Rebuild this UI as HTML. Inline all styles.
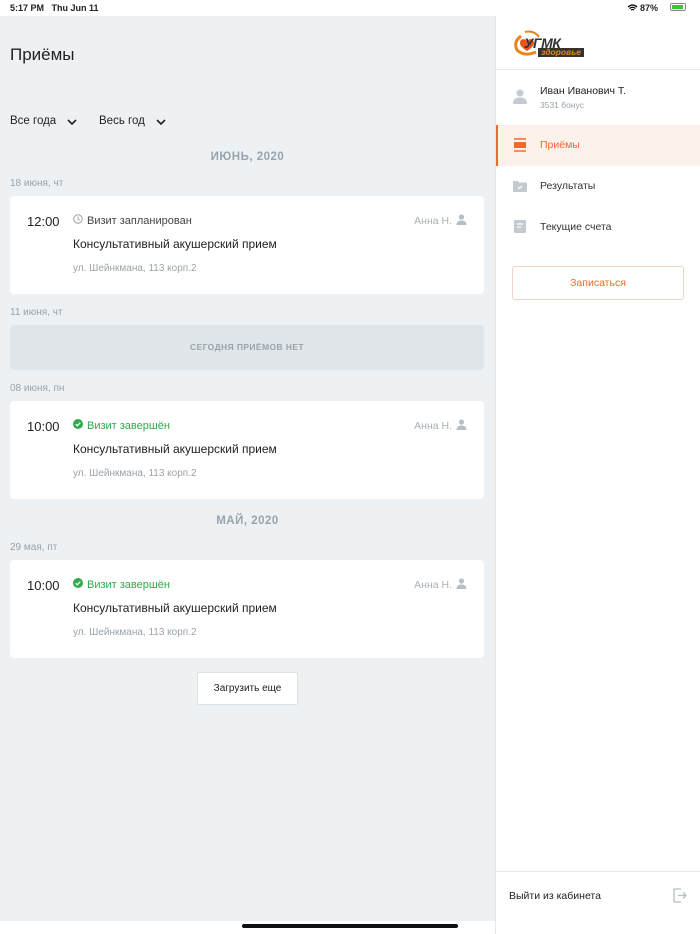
<!DOCTYPE html>
<html><head><meta charset="utf-8"><style>
*{margin:0;padding:0;box-sizing:border-box}
body{width:700px;height:934px;background:#fff;font-family:"Liberation Sans",sans-serif;position:relative;overflow:hidden;color:#222}
.a{position:absolute}
.main{left:0;top:16px;width:495px;height:905px;background:#edf1f4}
.side{left:495px;top:16px;width:205px;height:918px;background:#fff;border-left:1px solid #e3e7ea}
.card{position:absolute;left:10px;width:474px;height:98px;background:#fff;border-radius:4px}
.t{position:absolute;left:17px;top:18px;font-size:13px;color:#222}
.st{position:absolute;left:63px;top:19px;font-size:11px;color:#444}
.st.g{color:#2faa4a}
.tt{position:absolute;left:63px;top:41px;font-size:12px;color:#222}
.ad{position:absolute;left:63px;top:67px;font-size:10px;color:#9aa3aa}
.doc{position:absolute;right:32px;top:19px;font-size:10.5px;color:#a8b0b6}
.pi{position:absolute;right:17px;top:18px}
.dt{position:absolute;left:10px;font-size:10px;color:#99a1a8}
.mh{position:absolute;left:0;width:495px;text-align:center;font-size:11.5px;font-weight:bold;color:#9aa3ab;letter-spacing:.5px}
.mi{position:absolute;left:0;width:205px;height:41px}
.mi span{position:absolute;left:44px;top:14px;font-size:10.5px;color:#333}
</style></head><body>
<div class="a" style="left:10px;top:3px;font-size:9px;font-weight:bold">5:17 PM&nbsp;&nbsp; Thu Jun 11</div>
<div class="a" style="left:640px;top:3px;font-size:9px;font-weight:bold">87%</div>
<svg class="a" style="left:627px;top:4px" width="11" height="8"><path d="M1 3Q5.5-1 10 3M2.5 4.5Q5.5 2 8.5 4.5M4 6Q5.5 5 7 6" stroke="#000" stroke-width="1.3" fill="none"/></svg>
<div class="a" style="left:670px;top:3px;width:16px;height:8px;border:1px solid #888;border-radius:2px;padding:1px"><div style="width:11px;height:4px;background:#3c3"></div></div>

<div class="a main">
<div class="a" style="left:10px;top:29px;font-size:17px;color:#222">Приёмы</div>
<div class="a" style="left:10px;top:99px;font-size:11.5px">Все года</div>
<svg class="a" style="left:67px;top:103px" width="10" height="7"><path d="M1 1l4 4 4-4" stroke="#222" stroke-width="1.6" fill="none"/></svg>
<div class="a" style="left:99px;top:99px;font-size:11.5px">Весь год</div>
<svg class="a" style="left:156px;top:103px" width="10" height="7"><path d="M1 1l4 4 4-4" stroke="#222" stroke-width="1.6" fill="none"/></svg>
<div class="mh" style="top:135px">ИЮНЬ, 2020</div>
<div class="dt" style="top:162px">18 июня, чт</div>
<div class="card" style="top:180px">
 <div class="t">12:00</div>
 <svg class="a" style="left:63px;top:18px" width="10" height="10"><circle cx="5" cy="5" r="4.2" stroke="#9aa3aa" fill="none"/><path d="M5 2.5V5l1.8 1.2" stroke="#9aa3aa" fill="none"/></svg>
 <div class="st" style="left:77px">Визит запланирован</div>
 <div class="tt">Консультативный акушерский прием</div>
 <div class="ad">ул. Шейнкмана, 113 корп.2</div>
 <div class="doc">Анна Н.</div>
 <svg class="pi" width="11" height="11"><circle cx="5.5" cy="3" r="2.6" fill="#b7bec4"/><path d="M0.5 11Q0.5 6.5 5.5 6.5T10.5 11Z" fill="#b7bec4"/></svg>
</div>
<div class="dt" style="top:291px">11 июня, чт</div>
<div class="a" style="left:10px;top:309px;width:474px;height:45px;background:#e1e6ea;border-radius:4px;text-align:center;line-height:45px;font-size:8.5px;font-weight:bold;color:#9aa3ab;letter-spacing:.4px">СЕГОДНЯ ПРИЁМОВ НЕТ</div>
<div class="dt" style="top:367px">08 июня, пн</div>
<div class="card" style="top:385px">
 <div class="t">10:00</div>
 <svg class="a" style="left:63px;top:18px" width="10" height="10"><circle cx="5" cy="5" r="5" fill="#2faa4a"/><path d="M2.7 5.2l1.6 1.6 3-3.2" stroke="#fff" stroke-width="1.3" fill="none"/></svg>
 <div class="st g" style="left:77px">Визит завершён</div>
 <div class="tt">Консультативный акушерский прием</div>
 <div class="ad">ул. Шейнкмана, 113 корп.2</div>
 <div class="doc">Анна Н.</div>
 <svg class="pi" width="11" height="11"><circle cx="5.5" cy="3" r="2.6" fill="#b7bec4"/><path d="M0.5 11Q0.5 6.5 5.5 6.5T10.5 11Z" fill="#b7bec4"/></svg>
</div>
<div class="mh" style="top:499px">МАЙ, 2020</div>
<div class="dt" style="top:526px">29 мая, пт</div>
<div class="card" style="top:544px">
 <div class="t">10:00</div>
 <svg class="a" style="left:63px;top:18px" width="10" height="10"><circle cx="5" cy="5" r="5" fill="#2faa4a"/><path d="M2.7 5.2l1.6 1.6 3-3.2" stroke="#fff" stroke-width="1.3" fill="none"/></svg>
 <div class="st g" style="left:77px">Визит завершён</div>
 <div class="tt">Консультативный акушерский прием</div>
 <div class="ad">ул. Шейнкмана, 113 корп.2</div>
 <div class="doc">Анна Н.</div>
 <svg class="pi" width="11" height="11"><circle cx="5.5" cy="3" r="2.6" fill="#b7bec4"/><path d="M0.5 11Q0.5 6.5 5.5 6.5T10.5 11Z" fill="#b7bec4"/></svg>
</div>
<div class="a" style="left:197px;top:656px;width:101px;height:33px;background:#fff;border:1px solid #dde2e6;border-radius:2px;text-align:center;line-height:31px;font-size:10px">Загрузить еще</div>
</div>

<div class="a side">
 <div class="a" style="left:16px;top:12px;width:80px;height:30px">
  <svg width="80" height="30"><path d="M9 8Q1 14 5 22Q12 29 24 24" stroke="#e8861a" stroke-width="3" fill="none"/><path d="M8 15c0-5 6-5 7-1 1-4 7-4 7 1 0 4-7 8-7 8s-7-4-7-8z" fill="#e8561a"/><path d="M13 4Q22 2 27 9" stroke="#e8861a" stroke-width="2" fill="none"/></svg>
  <div class="a" style="left:12px;top:7px;font-size:14px;font-weight:bold;font-style:italic;color:#333;letter-spacing:-0.5px">УГМК</div>
  <div class="a" style="left:26px;top:20px;font-size:8.5px;font-weight:bold;font-style:italic;color:#e8861a;background:#333;padding:0 3px;line-height:9px">здоровье</div>
 </div>
 <div class="a" style="left:0;top:53px;width:205px;height:1px;background:#e6eaed"></div>
 <svg class="a" style="left:17px;top:73px" width="14" height="15"><circle cx="7" cy="4" r="3.5" fill="#c3cad0"/><path d="M0 15Q0 8.5 7 8.5T14 15Z" fill="#c3cad0"/></svg>
 <div class="a" style="left:44px;top:69px;font-size:10.5px">Иван Иванович Т.</div>
 <div class="a" style="left:44px;top:84px;font-size:8.5px;color:#9aa3aa">3531 бонус</div>
 <div class="mi" style="top:109px;background:#fdf1ec;border-left:2px solid #ef6a2c">
  <svg class="a" style="left:15px;top:13px" width="14" height="14"><path d="M1 1h12M1 13h12" stroke="#ef6a2c" stroke-width="1.4"/><rect x="1" y="4" width="12" height="6" fill="#ef6a2c"/></svg>
  <span style="left:42px;color:#ef6a2c">Приёмы</span></div>
 <div class="mi" style="top:150px">
  <svg class="a" style="left:17px;top:14px" width="14" height="12"><path d="M0 1h5l1 1.5h8V12H0z" fill="#c3cad0"/><path d="M5 7l1.5 1.5L9 6" stroke="#fff" stroke-width="1.1" fill="none"/></svg>
  <span>Результаты</span></div>
 <div class="mi" style="top:191px">
  <svg class="a" style="left:18px;top:13px" width="12" height="14"><rect width="12" height="13" rx="1" fill="#c3cad0"/><path d="M3 4h6M3 7h4" stroke="#fff" stroke-width="1.2"/></svg>
  <span>Текущие счета</span></div>
 <div class="a" style="left:16px;top:250px;width:172px;height:34px;border:1px solid #f2d4c6;border-radius:3px;text-align:center;line-height:32px;font-size:10.5px;color:#ef6a2c">Записаться</div>
 <div class="a" style="left:0;top:855px;width:205px;height:1px;background:#e6eaed"></div>
 <div class="a" style="left:13px;top:874px;font-size:10.5px">Выйти из кабинета</div>
 <svg class="a" style="left:176px;top:872px" width="15" height="15"><path d="M9 1H2v13h7M6 7.5h8M11 4.5l3 3-3 3" stroke="#b7bec4" stroke-width="1.3" fill="none"/></svg>
</div>
<div class="a" style="left:242px;top:924px;width:216px;height:4px;border-radius:2px;background:#111"></div>
</body></html>
